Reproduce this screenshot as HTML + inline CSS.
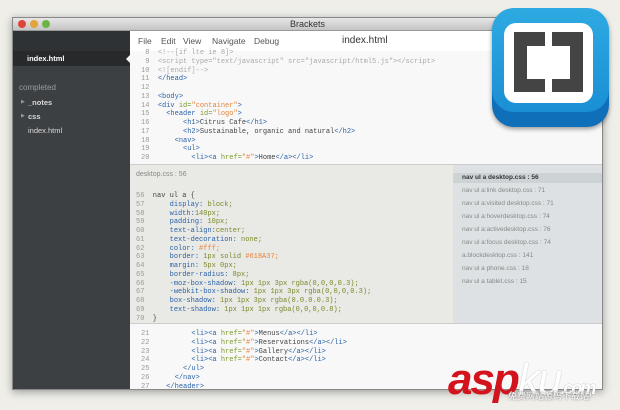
<!DOCTYPE html>
<html><head><style>
*{margin:0;padding:0;box-sizing:border-box}
body{width:620px;height:406px;background:#efeee9;position:relative;overflow:hidden;font-family:"Liberation Sans",sans-serif}
.win{position:absolute;left:12px;top:17px;width:591px;height:373px;background:#f8f8f8;box-shadow:0 2px 8px rgba(0,0,0,.35);border:1px solid #888}
.tb{position:absolute;left:0;top:0;right:0;height:13px;background:linear-gradient(#e6e6e6,#c4c4c4);border-bottom:1px solid #999;font-size:9px;text-align:center;line-height:13px;color:#333}
.dot{position:absolute;top:2px;width:8px;height:8px;border-radius:50%}
.side{position:absolute;left:0;top:13px;width:117px;bottom:0;background:#3d4043}
.side .top{height:20px;background:#2f3234}
.side .sel{position:absolute;top:20px;left:0;right:0;height:15px;background:#27292b;color:#fff;font-size:7.5px;font-weight:bold;line-height:15px;padding-left:14px}
.side .sel:after{content:"";position:absolute;right:0;top:4px;border:4px solid transparent;border-right-color:#f8f8f8}
.side .t{position:absolute;font-size:7.5px;color:#d8d8d8}
.menu{position:absolute;left:117px;top:13px;right:0;height:20px;background:#fff;font-size:8.5px;color:#555;line-height:20px}
.menu span{position:absolute}
.code{position:absolute;font-family:"Liberation Mono",monospace;font-size:7px;line-height:8.75px;white-space:pre;color:#444}
.ln{color:#999}
.tg{color:#2c63a8}.at{color:#7c9a2a}.st{color:#e8833a}.cm{color:#aaa}.pr{color:#2c63a8}.vl{color:#7c8a2a}
.inl{position:absolute;left:117px;top:146px;width:323px;height:160px;background:#e9e9e5;border-top:1px solid #ccc;border-bottom:1px solid #ccc}
.rp{position:absolute;left:440px;top:146px;right:0;height:160px;background:#dde1e3;border-top:1px solid #ccc;border-bottom:1px solid #ccc}
.rp div{position:absolute;left:9px;font-size:6.5px;color:#888}
.br{position:absolute;background:#444}
</style></head><body>
<div class="win">
<div class="tb">Brackets<div class="dot" style="left:5px;background:#e0443a"></div><div class="dot" style="left:17px;background:#e3a53a"></div><div class="dot" style="left:29px;background:#6cb543"></div></div>
<div class="side"><div class="top"></div><div class="sel">index.html</div>
<div class="t" style="left:6px;top:52px;color:#9a9da0;font-size:8px">completed</div>
<div class="t" style="left:8px;top:68px;color:#999;font-size:5px">▶</div><div class="t" style="left:15px;top:67px;font-weight:bold">_notes</div>
<div class="t" style="left:8px;top:82px;color:#999;font-size:5px">▶</div><div class="t" style="left:15px;top:81px;font-weight:bold">css</div>
<div class="t" style="left:15px;top:95px">index.html</div>
</div>
<div class="menu"><span style="left:8px">File</span><span style="left:31px">Edit</span><span style="left:53px">View</span><span style="left:82px">Navigate</span><span style="left:124px">Debug</span><span style="left:212px;font-size:10px;color:#333">index.html</span></div>
<div class="code" style="left:128px;top:31px"><span class="ln"> 8</span>  <span class="cm">&lt;!--[if lte ie 8]&gt;</span>
<span class="ln"> 9</span>  <span class="cm">&lt;script type="text/javascript" src="javascript/html5.js"&gt;&lt;/script&gt;</span>
<span class="ln">10</span>  <span class="cm">&lt;![endif]--&gt;</span>
<span class="ln">11</span>  <span class="tg">&lt;/head&gt;</span>
<span class="ln">12</span>
<span class="ln">13</span>  <span class="tg">&lt;body&gt;</span>
<span class="ln">14</span>  <span class="tg">&lt;div</span> <span class="at">id=</span><span class="st">"container"</span><span class="tg">&gt;</span>
<span class="ln">15</span>    <span class="tg">&lt;header</span> <span class="at">id=</span><span class="st">"logo"</span><span class="tg">&gt;</span>
<span class="ln">16</span>        <span class="tg">&lt;h1&gt;</span>Citrus Cafe<span class="tg">&lt;/h1&gt;</span>
<span class="ln">17</span>        <span class="tg">&lt;h2&gt;</span>Sustainable, organic and natural<span class="tg">&lt;/h2&gt;</span>
<span class="ln">18</span>      <span class="tg">&lt;nav&gt;</span>
<span class="ln">19</span>        <span class="tg">&lt;ul&gt;</span>
<span class="ln">20</span>          <span class="tg">&lt;li&gt;&lt;a</span> <span class="at">href=</span><span class="st">"#"</span><span class="tg">&gt;</span>Home<span class="tg">&lt;/a&gt;&lt;/li&gt;</span></div>
<div class="inl"><div style="position:absolute;left:6px;top:6px;font-size:7px;color:#888">desktop.css : 56</div>
<div class="code" style="left:6px;top:27px"><span class="ln">56</span>  nav ul a {
<span class="ln">57</span>      <span class="pr">display:</span> <span class="vl">block;</span>
<span class="ln">58</span>      <span class="pr">width:</span><span class="vl">140px;</span>
<span class="ln">59</span>      <span class="pr">padding:</span> <span class="vl">10px;</span>
<span class="ln">60</span>      <span class="pr">text-align:</span><span class="vl">center;</span>
<span class="ln">61</span>      <span class="pr">text-decoration:</span> <span class="vl">none;</span>
<span class="ln">62</span>      <span class="pr">color:</span> <span class="st">#fff;</span>
<span class="ln">63</span>      <span class="pr">border:</span> <span class="vl">1px solid</span> <span class="st">#618A37;</span>
<span class="ln">64</span>      <span class="pr">margin:</span> <span class="vl">5px 0px;</span>
<span class="ln">65</span>      <span class="pr">border-radius:</span> <span class="vl">8px;</span>
<span class="ln">66</span>      <span class="pr">-moz-box-shadow:</span> <span class="vl">1px 1px 3px rgba(0,0,0,0.3);</span>
<span class="ln">67</span>      <span class="pr">-webkit-box-shadow:</span> <span class="vl">1px 1px 3px rgba(0,0,0,0.3);</span>
<span class="ln">68</span>      <span class="pr">box-shadow:</span> <span class="vl">1px 1px 3px rgba(0.0.0.0.3);</span>
<span class="ln">69</span>      <span class="pr">text-shadow:</span> <span class="vl">1px 1px 1px rgba(0,0,0,0.8);</span>
<span class="ln">70</span>  }</div></div>
<div class="rp">
<div style="left:0;right:0;top:8px;height:10px;background:#cdd2d5;padding-left:9px;line-height:10px;color:#333;font-weight:bold">nav ul a desktop.css : 56</div>
<div style="top:22px">nav ul a:link desktop.css : 71</div>
<div style="top:35px">nav ul a:visited desktop.css : 71</div>
<div style="top:48px">nav ul a:hoverdesktop.css : 74</div>
<div style="top:61px">nav ul a:activedesktop.css : 76</div>
<div style="top:74px">nav ul a:focus desktop.css : 74</div>
<div style="top:87px">a.blockdesktop.css : 141</div>
<div style="top:100px">nav ul a phone.css : 18</div>
<div style="top:113px">nav ul a tablet.css : 15</div>
</div>
<div class="code" style="left:128px;top:312px"><span class="ln">21</span>          <span class="tg">&lt;li&gt;&lt;a</span> <span class="at">href=</span><span class="st">"#"</span><span class="tg">&gt;</span>Menus<span class="tg">&lt;/a&gt;&lt;/li&gt;</span>
<span class="ln">22</span>          <span class="tg">&lt;li&gt;&lt;a</span> <span class="at">href=</span><span class="st">"#"</span><span class="tg">&gt;</span>Reservations<span class="tg">&lt;/a&gt;&lt;/li&gt;</span>
<span class="ln">23</span>          <span class="tg">&lt;li&gt;&lt;a</span> <span class="at">href=</span><span class="st">"#"</span><span class="tg">&gt;</span>Gallery<span class="tg">&lt;/a&gt;&lt;/li&gt;</span>
<span class="ln">24</span>          <span class="tg">&lt;li&gt;&lt;a</span> <span class="at">href=</span><span class="st">"#"</span><span class="tg">&gt;</span>Contact<span class="tg">&lt;/a&gt;&lt;/li&gt;</span>
<span class="ln">25</span>        <span class="tg">&lt;/ul&gt;</span>
<span class="ln">26</span>      <span class="tg">&lt;/nav&gt;</span>
<span class="ln">27</span>    <span class="tg">&lt;/header&gt;</span></div>
</div>
<div style="position:absolute;left:492px;top:10px;width:117px;height:117px;border-radius:22px;background:#0f6fb8;box-shadow:0 2px 5px rgba(0,0,0,.4)"></div>
<div style="position:absolute;left:492px;top:8px;width:117px;height:104px;border-radius:22px;background:linear-gradient(#2eaae2,#1a8fd4)"></div>
<div style="position:absolute;left:504px;top:23px;width:89px;height:80px;border-radius:12px;background:#fff"></div>
<div class="br" style="left:514px;top:32px;width:13px;height:60px"></div>
<div class="br" style="left:514px;top:32px;width:31px;height:14px"></div>
<div class="br" style="left:514px;top:79px;width:31px;height:13px"></div>
<div class="br" style="left:570px;top:32px;width:13px;height:60px"></div>
<div class="br" style="left:552px;top:32px;width:31px;height:14px"></div>
<div class="br" style="left:552px;top:79px;width:31px;height:13px"></div>
<div style="position:absolute;left:448px;top:358px;font-size:44px;font-weight:bold;font-style:italic;color:#d4141c;letter-spacing:-2px;line-height:44px">asp<span style="color:#fff;font-weight:normal;text-shadow:0 0 1px #999">ku</span><span style="font-size:18px;color:#fff;text-shadow:0 0 1px #888">.com</span></div>
<div style="position:absolute;left:508px;top:389px;font-size:9px;color:#fff;text-shadow:0 0 2px #555;font-family:'Liberation Sans','Noto Sans CJK SC',sans-serif">免费网站源码下载站!</div>
</body></html>
